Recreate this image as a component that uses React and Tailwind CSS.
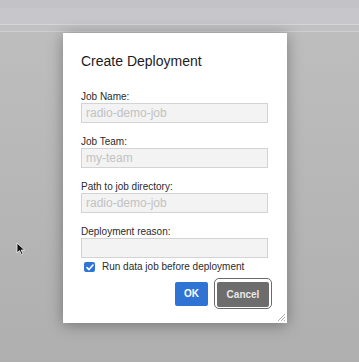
const fields = [
  { label: "Job Name:", value: "radio-demo-job" },
  { label: "Job Team:", value: "my-team" },
  { label: "Path to job directory:", value: "radio-demo-job" },
  { label: "Deployment reason:", value: "" },
];

const Field = ({ label, value }) => (
  <div className="flex flex-col">
    <label className="text-[10px] leading-[12px] text-[#2b2b2b]">{label}</label>
    <div className="w-[187px] h-[20px] border border-[#d3d3d3] bg-[#f3f3f3] px-[4px] flex items-center text-[12px] text-[#c2c2c2]">
      {value}
    </div>
  </div>
);

export default function App() {
  return (
    <div
      className="relative w-[359px] h-[362px] overflow-hidden bg-gradient-to-b from-[#bfbfc0] to-[#afafaf]"
      style={{ fontFamily: '"Liberation Sans", Arial, sans-serif' }}
    >
      <div className="h-[8px] bg-[#c3c3c7]" />
      <div className="h-[16px] bg-[#c7c7cb]" />
      <div className="h-[1px] bg-[#d6d6d8]" />
      <div className="h-[6px] bg-[#c1c1c4]" />
      <div className="h-[1px] bg-[#cfcfd1]" />

      <div className="relative ml-[63px] mt-[1px] w-[224px] h-[290px] bg-white pl-[18px] pr-[15px] pt-[20px] shadow-[0_2px_14px_rgba(0,0,0,0.35)]">
        <h1 className="text-[14px] leading-[17px] text-[#1c1c1c]">Create Deployment</h1>

        <div className="mt-[21px] flex flex-col gap-[13px]">
          {fields.map((f) => (
            <Field key={f.label} {...f} />
          ))}
        </div>

        <div className="mt-[3px] flex items-center h-[12px]">
          <span className="ml-[3px] w-[11px] h-[10px] rounded-[2px] bg-[#2f74d6] flex items-center justify-center">
            <svg width="8" height="7" viewBox="0 0 8 7" fill="none">
              <path d="M1 3.6 L3 5.6 L7 1" stroke="white" strokeWidth="1.6" strokeLinecap="round" strokeLinejoin="round" />
            </svg>
          </span>
          <span className="ml-[7px] text-[10px] leading-[12px] text-[#2b2b2b]">Run data job before deployment</span>
        </div>

        <div className="mt-[5px] flex items-center justify-end gap-[6px]">
          <button className="w-[33px] h-[24px] rounded-[2px] bg-[#2f74d4] text-white text-[10px] font-bold">OK</button>
          <div className="w-[58px] h-[31px] rounded-[5px] border border-[#6a6a6a] p-[2px] bg-white">
            <button className="w-full h-full rounded-[2px] bg-[#6d6d6d] text-[#e8e8e8] text-[10px] font-bold">Cancel</button>
          </div>
        </div>

        <svg className="absolute right-[1px] bottom-[1px]" width="9" height="9" viewBox="0 0 9 9">
          <path d="M8 1 L1 8 M8 4 L4 8 M8 7 L7 8" stroke="#9a9a9a" strokeWidth="0.8" />
        </svg>
      </div>

      <svg className="absolute left-[16px] top-[242px]" width="10" height="14" viewBox="0 0 10 14">
        <path d="M1 1 L1 11 L3.5 8.6 L5.4 12.6 L7 11.9 L5.2 8 L8.6 8 Z" fill="#111" stroke="#f4f4f4" strokeWidth="0.8" />
      </svg>
    </div>
  );
}
